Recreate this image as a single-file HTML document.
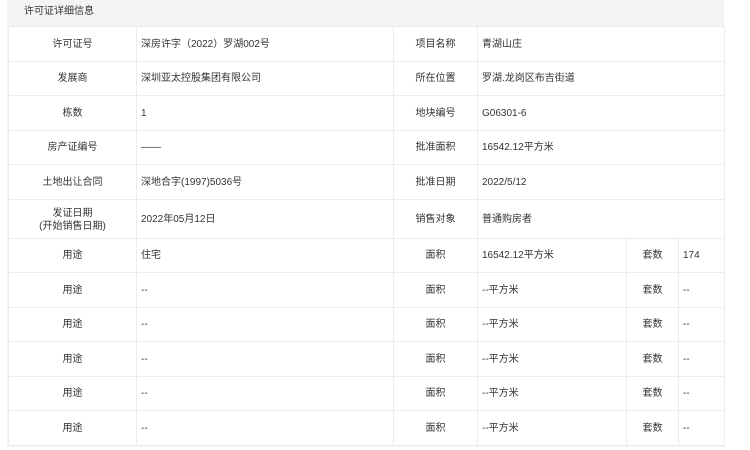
<!DOCTYPE html>
<html><head><meta charset="utf-8"><style>
body{margin:0;width:750px;height:450px;background:#fff;font-family:"Liberation Sans","Noto Sans CJK SC",sans-serif;font-size:10px;color:#333;overflow:hidden;position:relative}
.wrap{position:absolute;left:7px;top:0;width:717px;height:447px;background:#f4f4f4}
.hd{height:26px;line-height:24px;padding-left:17px;color:#333}
table{position:absolute;left:1px;top:26px;border-collapse:collapse;table-layout:fixed;width:716px}
td{background:#fff;border:1px solid #ececec;padding:2px 4px 0 4px;white-space:nowrap;overflow:hidden;height:31.5px;line-height:14px;vertical-align:middle}
td.l{text-align:center}
tr.tall td{height:36px}
</style></head><body>
<div class="wrap"><div class="hd">许可证详细信息</div>
<table>
<colgroup><col style="width:128px"><col style="width:257px"><col style="width:84px"><col style="width:149px"><col style="width:52px"><col style="width:46px"></colgroup>
<tr><td class="l">许可证号</td><td>深房许字（2022）罗湖002号</td><td class="l">项目名称</td><td colspan="3">青湖山庄</td></tr>
<tr><td class="l">发展商</td><td>深圳亚太控股集团有限公司</td><td class="l">所在位置</td><td colspan="3">罗湖.龙岗区布吉街道</td></tr>
<tr><td class="l">栋数</td><td>1&#8203;</td><td class="l">地块编号</td><td colspan="3">G06301-6&#12288;</td></tr>
<tr><td class="l">房产证编号</td><td>——</td><td class="l">批准面积</td><td colspan="3">16542.12平方米</td></tr>
<tr><td class="l">土地出让合同</td><td>深地合字(1997)5036号</td><td class="l">批准日期</td><td colspan="3">2022/5/12&#12288;</td></tr>
<tr class="tall"><td class="l" style="line-height:13px">发证日期<br>(开始销售日期)</td><td>2022年05月12日</td><td class="l">销售对象</td><td colspan="3">普通购房者</td></tr>
<tr><td class="l">用途</td><td>住宅</td><td class="l">面积</td><td>16542.12平方米</td><td class="l">套数</td><td>174&#12288;</td></tr>
<tr><td class="l">用途</td><td>--&#12288;</td><td class="l">面积</td><td>--平方米</td><td class="l">套数</td><td>--&#12288;</td></tr>
<tr><td class="l">用途</td><td>--&#12288;</td><td class="l">面积</td><td>--平方米</td><td class="l">套数</td><td>--&#12288;</td></tr>
<tr><td class="l">用途</td><td>--&#12288;</td><td class="l">面积</td><td>--平方米</td><td class="l">套数</td><td>--&#12288;</td></tr>
<tr><td class="l">用途</td><td>--&#12288;</td><td class="l">面积</td><td>--平方米</td><td class="l">套数</td><td>--&#12288;</td></tr>
<tr><td class="l">用途</td><td>--&#12288;</td><td class="l">面积</td><td>--平方米</td><td class="l">套数</td><td>--&#12288;</td></tr>
</table></div>
</body></html>
